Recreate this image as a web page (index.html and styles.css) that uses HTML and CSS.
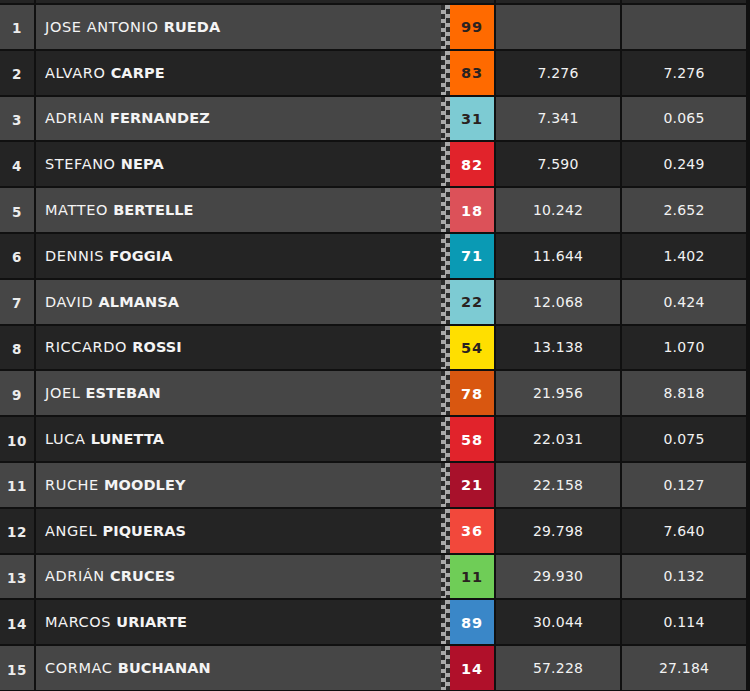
FILE: index.html
```html
<!DOCTYPE html>
<html>
<head>
<meta charset="utf-8">
<link rel="stylesheet" href="styles.css">
</head>
<body>
<div class="table">
  <div class="row dark top"><div class="pos"></div><div class="name"></div><div class="time"></div><div class="time"></div></div>
  <div class="row light"><div class="pos">1</div><div class="name"><span class="rider">JOSE ANTONIO <b>RUEDA</b></span><span class="flag"></span><span class="num c-orange dk">99</span></div><div class="time"></div><div class="time"></div></div>
  <div class="row dark"><div class="pos">2</div><div class="name"><span class="rider">ALVARO <b>CARPE</b></span><span class="flag"></span><span class="num c-orange dk">83</span></div><div class="time">7.276</div><div class="time">7.276</div></div>
  <div class="row light"><div class="pos">3</div><div class="name"><span class="rider">ADRIAN <b>FERNANDEZ</b></span><span class="flag"></span><span class="num c-lteal dk">31</span></div><div class="time">7.341</div><div class="time">0.065</div></div>
  <div class="row dark"><div class="pos">4</div><div class="name"><span class="rider">STEFANO <b>NEPA</b></span><span class="flag"></span><span class="num c-red">82</span></div><div class="time">7.590</div><div class="time">0.249</div></div>
  <div class="row light"><div class="pos">5</div><div class="name"><span class="rider">MATTEO <b>BERTELLE</b></span><span class="flag"></span><span class="num c-pink">18</span></div><div class="time">10.242</div><div class="time">2.652</div></div>
  <div class="row dark"><div class="pos">6</div><div class="name"><span class="rider">DENNIS <b>FOGGIA</b></span><span class="flag"></span><span class="num c-teal">71</span></div><div class="time">11.644</div><div class="time">1.402</div></div>
  <div class="row light"><div class="pos">7</div><div class="name"><span class="rider">DAVID <b>ALMANSA</b></span><span class="flag"></span><span class="num c-lteal dk">22</span></div><div class="time">12.068</div><div class="time">0.424</div></div>
  <div class="row dark"><div class="pos">8</div><div class="name"><span class="rider">RICCARDO <b>ROSSI</b></span><span class="flag"></span><span class="num c-yellow dk">54</span></div><div class="time">13.138</div><div class="time">1.070</div></div>
  <div class="row light"><div class="pos">9</div><div class="name"><span class="rider">JOEL <b>ESTEBAN</b></span><span class="flag"></span><span class="num c-burnt">78</span></div><div class="time">21.956</div><div class="time">8.818</div></div>
  <div class="row dark"><div class="pos">10</div><div class="name"><span class="rider">LUCA <b>LUNETTA</b></span><span class="flag"></span><span class="num c-red">58</span></div><div class="time">22.031</div><div class="time">0.075</div></div>
  <div class="row light"><div class="pos">11</div><div class="name"><span class="rider">RUCHE <b>MOODLEY</b></span><span class="flag"></span><span class="num c-wine">21</span></div><div class="time">22.158</div><div class="time">0.127</div></div>
  <div class="row dark"><div class="pos">12</div><div class="name"><span class="rider">ANGEL <b>PIQUERAS</b></span><span class="flag"></span><span class="num c-coral">36</span></div><div class="time">29.798</div><div class="time">7.640</div></div>
  <div class="row light"><div class="pos">13</div><div class="name"><span class="rider">ADRIÁN <b>CRUCES</b></span><span class="flag"></span><span class="num c-green dk">11</span></div><div class="time">29.930</div><div class="time">0.132</div></div>
  <div class="row dark"><div class="pos">14</div><div class="name"><span class="rider">MARCOS <b>URIARTE</b></span><span class="flag"></span><span class="num c-blue">89</span></div><div class="time">30.044</div><div class="time">0.114</div></div>
  <div class="row light"><div class="pos">15</div><div class="name"><span class="rider">CORMAC <b>BUCHANAN</b></span><span class="flag"></span><span class="num c-wine2">14</span></div><div class="time">57.228</div><div class="time">27.184</div></div>
</div>
</body>
</html>
```
FILE: styles.css
```css
html, body {
  margin: 0;
  padding: 0;
  background: #101010;
  overflow: hidden;
}
body {
  width: 750px;
  height: 691px;
  font-family: "DejaVu Sans", "Open Sans", sans-serif;
  color: #f2f2f2;
}
.table {
  display: flex;
  flex-direction: column;
  gap: 2px;
  width: 746px;
}
.row {
  display: grid;
  grid-template-columns: 34px 458px 124px 124px;
  column-gap: 2px;
  height: 43.8px;
}
.row.top {
  margin-top: -40.8px;
}
.row > div {
  display: flex;
  align-items: center;
}
.light > div { background: #464646; }
.dark > div { background: #242424; }
.pos {
  justify-content: center;
  font-size: 13.5px;
  font-weight: bold;
  padding-top: 3px;
  letter-spacing: 0.6px;
  color: #ececec;
}
.name {
  padding-left: 9px;
}
.rider {
  flex: 1;
  font-size: 14.5px;
  letter-spacing: 0.6px;
  white-space: nowrap;
  color: #f4f4f4;
}
.rider b {
  font-weight: bold;
  letter-spacing: 0.1px;
}
.flag {
  width: 9px;
  height: 100%;
  background: conic-gradient(#a9a9a9 25%, #2b2b2b 0 50%, #a9a9a9 0 75%, #2b2b2b 0) 0 0 / 9px 9px;
}
.num {
  width: 44px;
  height: 100%;
  display: flex;
  align-items: center;
  justify-content: center;
  font-size: 14.5px;
  font-weight: bold;
  color: #fff;
  letter-spacing: 1px;
  padding-top: 1px;
  box-sizing: border-box;
}
.num.dk { color: #2a2220; }
.time {
  justify-content: center;
  font-size: 14px;
  letter-spacing: 0.2px;
}
.c-orange { background: #ff6a00; }
.c-lteal { background: #7dcbd3; }
.c-red { background: #e1232b; }
.c-pink { background: #dc5159; }
.c-teal { background: #0a9ab4; }
.c-yellow { background: #ffdf00; }
.c-burnt { background: #d95710; }
.c-wine { background: #a8112b; }
.c-coral { background: #f2483b; }
.c-green { background: #6fcd57; }
.c-blue { background: #3a87c8; }
.c-wine2 { background: #b0102a; }
```
